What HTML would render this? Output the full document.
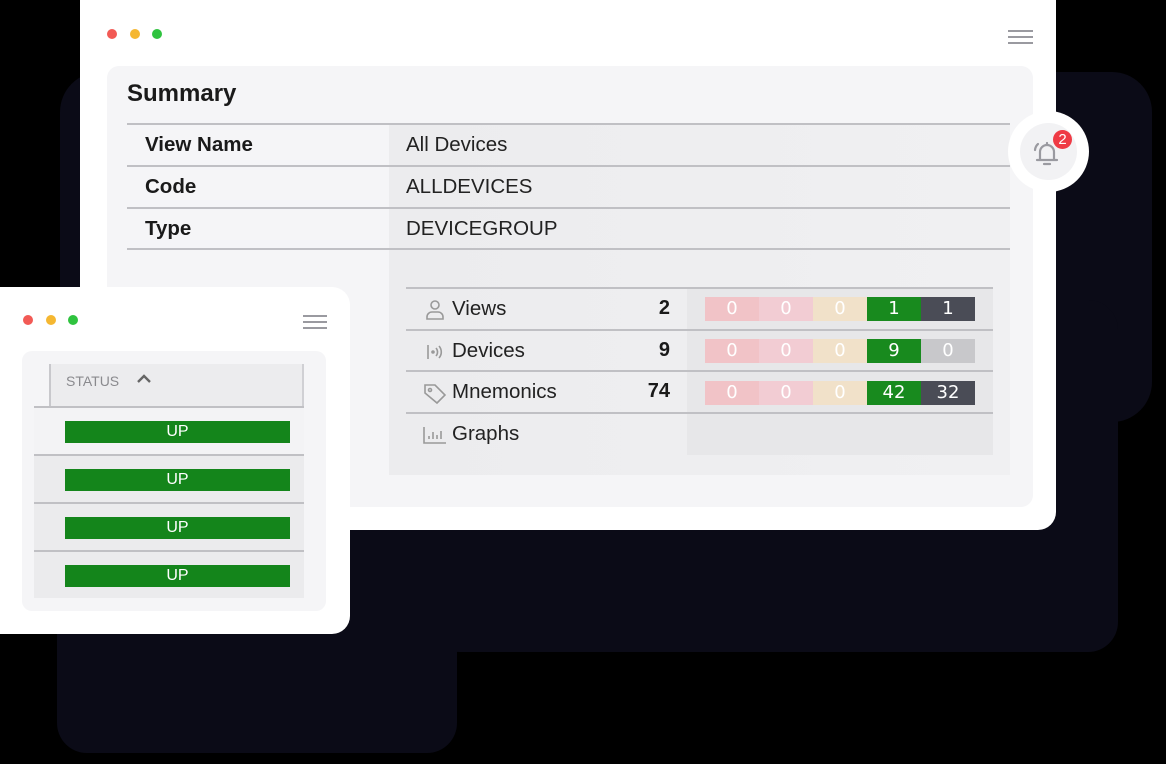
<!DOCTYPE html>
<html><head><meta charset="utf-8"><style>
*{margin:0;padding:0;box-sizing:border-box}
body{width:1166px;height:764px;background:#000;position:relative;overflow:hidden;font-family:"Liberation Sans",sans-serif}
.abs{position:absolute}
.sh{background:#0b0b17;border-radius:30px}
.win{background:#fff}
.dot{position:absolute;width:10px;height:10px;border-radius:50%}
.hb{position:absolute;height:2px;background:#9a9aa0}
.line{position:absolute;height:2px;background:#c0c0c4}
.lbl{position:absolute;font-weight:bold;font-size:20.5px;color:#1a1a1a}
.val{position:absolute;font-size:20.5px;color:#222}
.seg{position:absolute;height:24px;width:54px;color:#fff;font-size:18px;text-align:center;line-height:24px;font-family:"DejaVu Sans",sans-serif}
.num{position:absolute;font-weight:bold;font-size:20px;width:60px;text-align:right;color:#1a1a1a}
.up{position:absolute;left:65px;width:225px;height:22px;background:#14851b;color:#fff;font-size:16px;text-align:center;line-height:22px}
</style></head><body>
<div class="abs sh" style="left:60px;top:72px;width:1092px;height:350px;border-radius:40px"></div>
<div class="abs sh" style="left:430px;top:300px;width:688px;height:352px"></div>
<div class="abs sh" style="left:57px;top:500px;width:400px;height:253px"></div>

<div class="abs win" style="left:80px;top:0;width:976px;height:530px;border-radius:0 0 18px 18px"></div>
<div class="dot" style="left:107px;top:29px;background:#f25a55"></div>
<div class="dot" style="left:130px;top:29px;background:#f5b731"></div>
<div class="dot" style="left:152px;top:29px;background:#2fc33f"></div>
<div class="hb" style="left:1008px;top:30px;width:25px"></div>
<div class="hb" style="left:1008px;top:36px;width:25px"></div>
<div class="hb" style="left:1008px;top:42px;width:25px"></div>
<div class="abs" style="left:107px;top:66px;width:926px;height:441px;background:#f5f5f7;border-radius:12px"></div>
<div class="abs" style="left:389px;top:124px;width:621px;height:351px;background:linear-gradient(90deg,#ececee,#f0f0f2)"></div>
<div class="abs" style="left:127px;top:80px;font-size:24px;font-weight:bold;color:#1a1a1a">Summary</div>
<div class="line" style="left:127px;top:123px;width:883px"></div>
<div class="line" style="left:127px;top:165px;width:883px"></div>
<div class="line" style="left:127px;top:207px;width:883px"></div>
<div class="line" style="left:127px;top:248px;width:883px"></div>
<div class="lbl" style="left:145px;top:133px">View Name</div>
<div class="lbl" style="left:145px;top:175px">Code</div>
<div class="lbl" style="left:145px;top:217px">Type</div>
<div class="val" style="left:406px;top:133px">All Devices</div>
<div class="val" style="left:406px;top:175px">ALLDEVICES</div>
<div class="val" style="left:406px;top:217px">DEVICEGROUP</div>

<div class="abs" style="left:687px;top:289px;width:306px;height:166px;background:#e7e7e9"></div>
<div class="line" style="left:406px;top:287px;width:587px"></div>
<div class="line" style="left:406px;top:329px;width:587px"></div>
<div class="line" style="left:406px;top:370px;width:587px"></div>
<div class="line" style="left:406px;top:412px;width:587px"></div>

<svg class="abs" style="left:424px;top:299px" width="22" height="22" viewBox="0 0 22 22" fill="none" stroke="#999" stroke-width="1.6"><circle cx="11" cy="6" r="4"/><path d="M3 20v-2a5 5 0 0 1 5-5h6a5 5 0 0 1 5 5v2z"/></svg>
<svg class="abs" style="left:424px;top:341px" width="22" height="22" viewBox="0 0 22 22" fill="none" stroke="#999" stroke-width="1.6"><path d="M4 4v14"/><circle cx="9" cy="11" r="1" fill="#999"/><path d="M12 7a6 6 0 0 1 0 8M15 5a9 9 0 0 1 0 12"/></svg>
<svg class="abs" style="left:422px;top:382px" width="26" height="24" viewBox="0 0 26 24" fill="none" stroke="#999" stroke-width="1.6"><path d="M3 3h10l10 10-8 8L3 11z"/><circle cx="8" cy="8" r="1.5"/></svg>
<svg class="abs" style="left:422px;top:425px" width="26" height="20" viewBox="0 0 26 20" fill="none" stroke="#999" stroke-width="1.6"><path d="M2 2v16h22M7 14v-3M11 14v-7M15 14v-4M19 14v-8"/></svg>

<div class="val" style="left:452px;top:297px">Views</div>
<div class="val" style="left:452px;top:339px">Devices</div>
<div class="val" style="left:452px;top:380px">Mnemonics</div>
<div class="val" style="left:452px;top:422px">Graphs</div>
<div class="num" style="left:610px;top:297px">2</div>
<div class="num" style="left:610px;top:339px">9</div>
<div class="num" style="left:610px;top:380px">74</div>

<div class="seg" style="left:705px;top:297px;background:#f1c3c7">0</div>
<div class="seg" style="left:759px;top:297px;background:#f2ccd3">0</div>
<div class="seg" style="left:813px;top:297px;background:#f1e1c9">0</div>
<div class="seg" style="left:867px;top:297px;background:#188a1e">1</div>
<div class="seg" style="left:921px;top:297px;background:#4a4c56">1</div>
<div class="seg" style="left:705px;top:339px;background:#f1c3c7">0</div>
<div class="seg" style="left:759px;top:339px;background:#f2ccd3">0</div>
<div class="seg" style="left:813px;top:339px;background:#f1e1c9">0</div>
<div class="seg" style="left:867px;top:339px;background:#188a1e">9</div>
<div class="seg" style="left:921px;top:339px;background:#c8c8cb">0</div>
<div class="seg" style="left:705px;top:381px;background:#f1c3c7">0</div>
<div class="seg" style="left:759px;top:381px;background:#f2ccd3">0</div>
<div class="seg" style="left:813px;top:381px;background:#f1e1c9">0</div>
<div class="seg" style="left:867px;top:381px;background:#188a1e">42</div>
<div class="seg" style="left:921px;top:381px;background:#4a4c56">32</div>

<div class="abs" style="left:1008px;top:111px;width:81px;height:81px;border-radius:50%;background:#fff"></div>
<div class="abs" style="left:1020px;top:123px;width:57px;height:57px;border-radius:50%;background:#f2f2f4"></div>
<svg class="abs" style="left:1032px;top:138px" width="30" height="30" viewBox="0 0 30 30" fill="none" stroke="#9a9aa0" stroke-width="2.2" stroke-linecap="round"><path d="M8 21V14a7 7 0 0 1 14 0v7M5 22h20M12 26h6M15 5v2M3 12a9 9 0 0 1 3-6"/></svg>
<div class="abs" style="left:1053px;top:130px;width:19px;height:19px;border-radius:50%;background:#ef3b45;color:#fff;font-size:15px;text-align:center;line-height:19px">2</div>

<div class="abs win" style="left:0;top:287px;width:350px;height:347px;border-radius:0 18px 18px 0"></div>
<div class="dot" style="left:23px;top:315px;background:#f25a55"></div>
<div class="dot" style="left:46px;top:315px;background:#f5b731"></div>
<div class="dot" style="left:68px;top:315px;background:#2fc33f"></div>
<div class="hb" style="left:303px;top:315px;width:24px"></div>
<div class="hb" style="left:303px;top:321px;width:24px"></div>
<div class="hb" style="left:303px;top:327px;width:24px"></div>
<div class="abs" style="left:22px;top:351px;width:304px;height:260px;background:#f5f5f7;border-radius:10px"></div>
<div class="abs" style="left:50px;top:364px;width:254px;height:234px;background:#ececee"></div>
<div class="abs" style="left:34px;top:408px;width:270px;height:47px;background:#f3f3f5"></div>
<div class="abs" style="left:34px;top:456px;width:270px;height:142px;background:#ebebed"></div>
<div class="abs" style="left:49px;top:364px;width:2px;height:43px;background:#c8c8cc"></div>
<div class="abs" style="left:302px;top:364px;width:2px;height:43px;background:#d0d0d4"></div>
<div class="abs" style="left:66px;top:373px;font-size:14px;color:#8a8a8e">STATUS</div>
<svg class="abs" style="left:136px;top:373px" width="16" height="12" viewBox="0 0 16 12" fill="none" stroke="#666" stroke-width="2.4"><path d="M2 9l6-6 6 6"/></svg>
<div class="line" style="left:34px;top:406px;width:270px"></div>
<div class="line" style="left:34px;top:454px;width:270px"></div>
<div class="line" style="left:34px;top:502px;width:270px"></div>
<div class="line" style="left:34px;top:550px;width:270px"></div>
<div class="up" style="top:421px">UP</div>
<div class="up" style="top:469px">UP</div>
<div class="up" style="top:517px">UP</div>
<div class="up" style="top:565px">UP</div>
</body></html>
